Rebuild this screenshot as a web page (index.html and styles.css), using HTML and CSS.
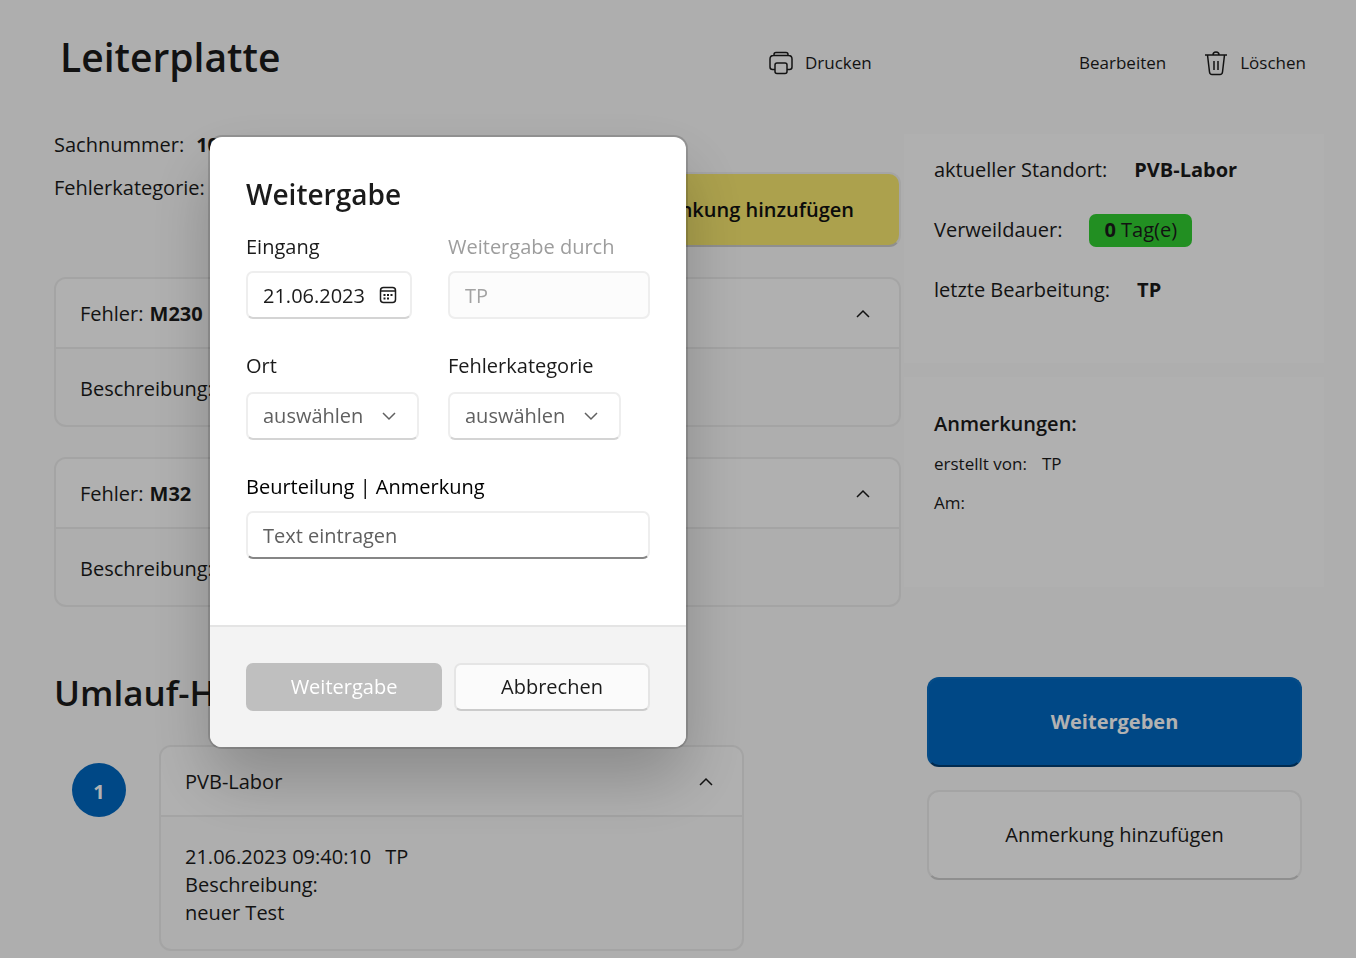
FILE: index.html
```html
<!DOCTYPE html>
<html lang="de">
<head>
<meta charset="utf-8">
<meta name="viewport" content="width=device-width, initial-scale=1">
<title>Leiterplatte</title>
<link rel="stylesheet" href="styles.css">
</head>
<body>
<div class="page">
  <header class="topbar">
    <h1 class="title">Leiterplatte</h1>
    <nav class="commands">
      <button class="command" type="button">
        <svg class="command-icon" viewBox="0 0 26 26" aria-hidden="true"><path d="M6 5.500V4.500q0-2 2-2h10q2 0 2 2v1M7 19.500H4.500q-2.500 0-2.500-2.500V9Q2 5.500 5.500 5.500h15Q24 5.500 24 9v8q0 2.500-2.500 2.500H19M9 13h8q2 0 2 2v6.500q0 2-2 2H9q-2 0-2-2V15q0-2 2-2z"/></svg>
        Drucken
      </button>
      <button class="command command-edit" type="button">Bearbeiten</button>
      <button class="command" type="button">
        <svg class="command-icon" viewBox="0 0 26 26" aria-hidden="true"><path d="M2 5h22M4.500 5l2 17q.3 2.500 2.500 2.500h8q2.200 0 2.500-2.500l2-17M10 5q0-3 3-3t3 3M11 11v9M15 11v9"/></svg>
        Löschen
      </button>
    </nav>
  </header>

  <div class="columns">
    <main class="main">
      <section class="summary">
        <dl class="facts">
          <div class="fact"><dt>Sachnummer:</dt><dd>1000</dd></div>
          <div class="fact"><dt>Fehlerkategorie:</dt><dd></dd></div>
        </dl>
        <button class="restrict" type="button">Einschränkung hinzufügen</button>
      </section>
      <section class="card">
        <button class="card-head" type="button"><span>Fehler:<b class="code">M230</b></span>
          <svg class="chevron" viewBox="0 0 14 14" aria-hidden="true"><path d="M1 10l6-6 6 6"/></svg></button>
        <div class="card-body">Beschreibung:</div>
      </section>
      <section class="card">
        <button class="card-head" type="button"><span>Fehler:<b class="code">M32</b></span>
          <svg class="chevron" viewBox="0 0 14 14" aria-hidden="true"><path d="M1 10l6-6 6 6"/></svg></button>
        <div class="card-body">Beschreibung:</div>
      </section>
    </main>
    <aside class="side">
      <dl class="panel panel-status">
        <div class="status"><dt>aktueller Standort:</dt><dd>PVB-Labor</dd></div>
        <div class="status"><dt>Verweildauer:</dt><dd class="badge"><b>0</b> Tag(e)</dd></div>
        <div class="status"><dt>letzte Bearbeitung:</dt><dd>TP</dd></div>
      </dl>
      <section class="panel panel-notes">
        <h2 class="notes-title">Anmerkungen:</h2>
        <p class="note"><span>erstellt von:</span><span>TP</span></p>
        <p class="note">Am:</p>
      </section>
    </aside>
  </div>

  <div class="columns">
    <section class="history">
      <h2 class="history-title">Umlauf-Historie</h2>
      <div class="step">
        <span class="step-number">1</span>
        <article class="card step-card">
          <button class="card-head" type="button"><span>PVB-Labor</span>
            <svg class="chevron" viewBox="0 0 14 14" aria-hidden="true"><path d="M1 10l6-6 6 6"/></svg></button>
          <div class="card-body">
            <p class="stamp"><time>21.06.2023 09:40:10</time><span>TP</span></p>
            <p>Beschreibung:</p>
            <p>neuer Test</p>
          </div>
        </article>
      </div>
    </section>
    <div class="actions">
      <button class="action action-primary" type="button">Weitergeben</button>
      <button class="action" type="button">Anmerkung hinzufügen</button>
    </div>
  </div>
</div>

<div class="overlay">
  <form class="dialog" role="dialog" aria-modal="true" aria-labelledby="dialog-title">
    <div class="dialog-body">
      <h2 class="dialog-title" id="dialog-title">Weitergabe</h2>
      <div class="fields">
        <div class="field">
          <label for="date">Eingang</label>
          <div class="control control-date">
            <input class="input" id="date" type="text" value="21.06.2023">
            <svg class="calendar" viewBox="0 0 18 18" aria-hidden="true"><rect x="1.500" y="1.500" width="15" height="15" rx="3"/><path d="M1.500 5h15"/><path class="dots" d="M4.500 8h2v2h-2zM8 8h2v2H8zM11.500 8h2v2h-2zM4.500 11.500h2v2h-2zM8 11.500h2v2H8z"/></svg>
          </div>
        </div>
        <div class="field">
          <label class="muted" for="by">Weitergabe durch</label>
          <div class="control control-disabled"><input class="input" id="by" type="text" value="TP" disabled></div>
        </div>
        <div class="field field-select">
          <label for="place">Ort</label>
          <div class="control control-select">
            <select class="input" id="place"><option>auswählen</option></select>
            <svg class="chevron chevron-down" viewBox="0 0 14 14" aria-hidden="true"><path d="M1 4l6 6 6-6"/></svg>
          </div>
        </div>
        <div class="field field-select">
          <label for="category">Fehlerkategorie</label>
          <div class="control control-select">
            <select class="input" id="category"><option>auswählen</option></select>
            <svg class="chevron chevron-down" viewBox="0 0 14 14" aria-hidden="true"><path d="M1 4l6 6 6-6"/></svg>
          </div>
        </div>
        <div class="field field-wide">
          <label for="note">Beurteilung | Anmerkung</label>
          <div class="control control-text"><input class="input" id="note" type="text" placeholder="Text eintragen"></div>
        </div>
      </div>
    </div>
    <div class="dialog-foot">
      <button class="button button-disabled" type="submit" disabled>Weitergabe</button>
      <button class="button" type="button">Abbrechen</button>
    </div>
  </form>
</div>
</body>
</html>
```
FILE: styles.css
```css
* { box-sizing: border-box; }
body {
  margin: 0;
  background: #f9f9f9;
  color: #1b1b1b;
  font: 20px/28px "Open Sans", "Noto Sans", sans-serif;
}
h1, h2, p, dl, dd { margin: 0; }
button, input, select { font: inherit; color: inherit; }
svg { fill: none; stroke: currentColor; flex: none; }
.page { padding: 0 32px 0 54px; }

.topbar {
  display: grid;
  grid-template-columns: minmax(0, 1fr) 556px;
  height: 134px;
  padding-top: 32px;
}
.title { padding-left: 6px; font-size: 39px; font-weight: 600; line-height: 50px; }
.commands {
  display: flex;
  align-items: center;
  height: 62px;
  padding-right: 18px;
}
.command {
  display: flex;
  align-items: center;
  gap: 11px;
  padding: 0;
  border: 0;
  background: none;
  font-size: 17px;
}
.command-edit { margin-left: auto; margin-right: 37px; }
.command-icon { width: 26px; height: 26px; stroke-width: 1.500; }

.columns {
  display: grid;
  grid-template-columns: minmax(0, 1fr) 420px;
  gap: 3px;
}
.summary { display: flex; justify-content: space-between; height: 143px; }
.facts { margin-top: -3px; }
.fact { display: flex; gap: 12px; margin-bottom: 15px; }
.fact dd { font-weight: 700; }
.restrict {
  height: 75px;
  margin-top: 38px;
  padding: 0 45px;
  border: 2px solid #ececec;
  border-bottom-color: #cdcdcd;
  border-radius: 12px;
  background: #f6e76f;
  font-weight: 600;
  color: #111;
}
.card {
  margin-bottom: 30px;
  border: 2px solid #ebebeb;
  border-radius: 12px;
  background: #f9f9f9;
}
.card-head {
  display: flex;
  align-items: center;
  justify-content: space-between;
  width: 100%;
  height: 70px;
  padding: 2px 29px 0 24px;
  border: 0;
  border-bottom: 2px solid #ebebeb;
  border-radius: 10px 10px 0 0;
  background: #fcfcfc;
}
.code { margin-left: 6px; }
.chevron { width: 14px; height: 14px; stroke-width: 1.500; }
.card-body { padding: 26px 24px 22px; }

.panel { padding: 0 30px; background: #fcfcfc; }
.panel-status { height: 229px; padding-top: 21px; }
.status { display: flex; align-items: center; gap: 27px; height: 30px; margin-bottom: 30px; }
.status dd { font-weight: 700; }
.status .badge {
  height: 33px;
  padding: 2px 15px;
  border-radius: 7px;
  background: #32cd32;
  font-weight: 400;
}
.panel-notes { height: 210px; margin-top: 14px; padding-top: 33px; }
.notes-title { font-size: 20px; font-weight: 600; line-height: 28px; margin-bottom: 12px; }
.note { display: flex; gap: 15px; margin-bottom: 11px; font-size: 17px; }

.history { padding-top: 32px; }
.history-title { font-size: 35px; font-weight: 600; line-height: 48px; margin-bottom: 28px; }
.step { display: flex; gap: 33px; padding: 0 157px 0 18px; }
.step-number {
  display: grid;
  place-items: center;
  flex: none;
  width: 54px;
  height: 54px;
  margin-top: 18px;
  padding-top: 4px;
  border-radius: 50%;
  background: #0067c0;
  color: #fff;
  font-weight: 700;
}
.step-card { flex: 1; margin-bottom: 0; }
.stamp { display: flex; gap: 14px; }
.actions { display: flex; flex-direction: column; gap: 23px; padding: 40px 22px 0 23px; }
.action {
  height: 90px;
  border: 2px solid #ebebeb;
  border-bottom-color: #cdcdcd;
  border-radius: 12px;
  background: #fdfdfd;
}
.action-primary {
  border-color: #0a6dc2;
  border-bottom-color: #003e73;
  background: #0067c0;
  color: #fff;
  font-weight: 700;
}

.overlay {
  position: fixed;
  inset: 0;
  display: flex;
  align-items: flex-start;
  padding: 137px 0 0 210px;
  background: rgba(0, 0, 0, .3);
}
.dialog {
  width: 476px;
  overflow: hidden;
  border-radius: 12px;
  background: #fff;
  box-shadow: 0 0 0 2px rgba(0, 0, 0, .15), 0 32px 64px rgba(0, 0, 0, .22);
}
.dialog-body { padding: 37px 36px 66px; }
.dialog-title { font-size: 28px; font-weight: 600; line-height: 40px; margin-bottom: 19px; }
.fields { display: grid; grid-template-columns: 202px minmax(0, 1fr); gap: 33px 0; }
.field { display: flex; flex-direction: column; align-items: flex-start; gap: 10px; }
.field-select { gap: 12px; }
.field-wide { grid-column: 1 / -1; color: #000; }
.muted { color: #9d9d9d; }
.control {
  display: flex;
  align-items: center;
  width: 100%;
  height: 48px;
  border: 2px solid #eee;
  border-bottom-color: #d4d4d4;
  border-radius: 7px;
  background: #fff;
}
.control-date { width: 166px; padding-right: 13px; }
.control-disabled { border-color: #eee; background: #fcfcfc; }
.control-select { position: relative; width: 173px; color: #606060; }
.control-text { border-bottom-color: #868686; }
.input {
  width: 100%;
  min-width: 0;
  height: 100%;
  padding: 0 0 0 15px;
  border: 0;
  outline: 0;
  background: transparent;
  appearance: none;
}
.input:disabled { color: #a3a3a3; }
.input::placeholder { color: #606060; opacity: 1; }
.calendar { width: 18px; height: 18px; stroke-width: 1.500; }
.dots { fill: currentColor; stroke: none; }
.chevron-down { position: absolute; right: 21px; pointer-events: none; }
.dialog-foot {
  display: grid;
  grid-template-columns: 1fr 1fr;
  gap: 12px;
  padding: 36px;
  border-top: 2px solid #e4e4e4;
  background: #f3f3f3;
}
.button {
  height: 48px;
  border: 2px solid #e5e5e5;
  border-bottom-color: #cbcbcb;
  border-radius: 7px;
  background: #fbfbfb;
}
.button-disabled { border: 0; background: #bfbfbf; color: #fff; }
```
